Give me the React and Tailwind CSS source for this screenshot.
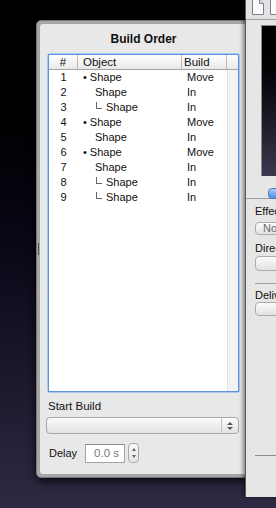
import React from "react";

const rows = [
  { n: 1, level: 0, build: "Move" },
  { n: 2, level: 1, build: "In" },
  { n: 3, level: 2, build: "In" },
  { n: 4, level: 0, build: "Move" },
  { n: 5, level: 1, build: "In" },
  { n: 6, level: 0, build: "Move" },
  { n: 7, level: 1, build: "In" },
  { n: 8, level: 2, build: "In" },
  { n: 9, level: 2, build: "In" },
];

function UpDown({ size = 3, gap = "gap-[2px]" }) {
  return (
    <div className={`flex flex-col items-center ${gap}`}>
      <div className="w-0 h-0 border-l-[3px] border-r-[3px] border-b-[3px] border-l-transparent border-r-transparent border-b-[#5a5a5a]" />
      <div className="w-0 h-0 border-l-[3px] border-r-[3px] border-t-[3px] border-l-transparent border-r-transparent border-t-[#5a5a5a]" />
    </div>
  );
}

function ObjectCell({ level }) {
  if (level === 0) {
    return (
      <div className="w-[104px] pl-[5px] flex items-center">
        <span className="mr-[3px]">•</span>
        <span>Shape</span>
      </div>
    );
  }
  if (level === 1) {
    return <div className="w-[104px] pl-[17px]">Shape</div>;
  }
  return (
    <div className="w-[104px] pl-[18px] flex items-center">
      <span className="inline-block w-[6px] h-[7px] border-l border-b border-[#666] mr-[4px] mb-[4px]" />
      <span>Shape</span>
    </div>
  );
}

function DocIcon() {
  return (
    <svg width="12" height="16" viewBox="0 0 12 16">
      <path d="M0.5 0.5 H7.5 L11.5 4.5 V15.5 H0.5 Z" fill="#fbfbfb" stroke="#7b7f95" />
      <path d="M7.5 0.5 V4.5 H11.5" fill="#e6e6ee" stroke="#7b7f95" />
    </svg>
  );
}

function BuildOrderPanel() {
  return (
    <div className="absolute left-[36px] top-[20px] w-[220px] h-[458px] rounded-[5px] bg-[#a6a6a6] border border-[#767676] p-[3px] shadow-[0_3px_8px_rgba(0,0,0,0.85)]">
      <div className="absolute left-[1px] top-[222px] w-[1px] h-[12px] bg-[#4f4f4f]" />
      <div className="h-full rounded-[3px] bg-[#e8e8e8] pl-[7px] flex flex-col">
        <div className="w-[193px] h-[29px] flex items-center justify-center text-[12px] font-bold text-[#111]">
          Build Order
        </div>

        <div className="w-[193px] h-[340px] rounded-[3px] border border-[#a9c8f0]">
          <div className="h-full border border-[#5f92da] bg-white flex flex-col">
            <div className="h-[15px] flex border-b border-[#a5a5a5] bg-linear-to-b from-white to-[#e9e9e9] text-[11.5px] leading-[14px] text-[#111]">
              <div className="w-[29px] text-center border-r border-[#b9b9b9]">#</div>
              <div className="w-[104px] pl-[5px] border-r border-[#b9b9b9]">Object</div>
              <div className="w-[45px] pl-[2px] border-r border-[#b9b9b9]">Build</div>
              <div className="flex-1" />
            </div>
            <div className="flex-1 flex">
              <div className="w-[178px] flex flex-col text-[11px] text-[#111]">
                {rows.map((r) => (
                  <div key={r.n} className="h-[15px] flex items-center leading-[15px]">
                    <div className="w-[29px] text-center">{r.n}</div>
                    <ObjectCell level={r.level} />
                    <div className="w-[45px] pl-[5px]">{r.build}</div>
                  </div>
                ))}
              </div>
              <div className="flex-1 bg-[#f3f3f3] border-l border-[#e2e2e2]" />
            </div>
          </div>
        </div>

        <div className="mt-[6px] pl-[1px] text-[11.5px] leading-[14px] text-[#111]">Start Build</div>

        <div className="mt-[4px] -ml-[1px] w-[193px] h-[17px] rounded-[4px] border border-[#a7a7a7] bg-linear-to-b from-[#fbfbfb] to-[#e3e3e3] flex justify-end">
          <div className="w-[17px] border-l border-[#c2c2c2] flex items-center justify-center">
            <UpDown />
          </div>
        </div>

        <div className="mt-[9px] h-[20px] flex items-center text-[11px]">
          <div className="w-[38px] pl-[2px] text-[#111]">Delay</div>
          <div className="w-[40px] h-[19px] bg-white border border-[#a3a3a3] border-t-[#8c8c8c] text-right pr-[5px] leading-[17px] text-[#7a7a7a] text-[11.5px]">
            0.0 s
          </div>
          <div className="ml-[3px] w-[11px] h-[20px] rounded-[4px] border border-[#a9a9a9] bg-linear-to-b from-[#fafafa] to-[#e4e4e4] flex items-center justify-center">
            <div className="flex flex-col items-center gap-[4px]">
              <div className="w-0 h-0 border-l-[2px] border-r-[2px] border-b-[3px] border-l-transparent border-r-transparent border-b-[#666]" />
              <div className="w-0 h-0 border-l-[2px] border-r-[2px] border-t-[3px] border-l-transparent border-r-transparent border-t-[#666]" />
            </div>
          </div>
        </div>
      </div>
    </div>
  );
}

function Inspector() {
  return (
    <div className="absolute left-[245px] top-0 w-[40px] h-[497px] bg-[#e6e6e6] border-l border-[#585858] shadow-[-2px_0_4px_rgba(0,0,0,0.45)] flex flex-col text-[11px] text-[#111]">
      <div className="h-[21px] flex items-start gap-[6px] pl-[6px] -mt-[1px] bg-[#e2e2e2] border-b border-[#a0a0a0]">
        <DocIcon />
        <DocIcon />
      </div>
      <div className="mt-[5px] ml-[15px] h-[151px] border-l border-t border-[#8a8a8a] bg-linear-to-b from-[#000] to-[#3c3a50]" />
      <div className="mt-[12px] h-[12px] relative">
        <div className="absolute left-0 right-0 top-[10px] h-px bg-[#9a9a9a]" />
        <div className="absolute left-[22px] top-0 w-[30px] h-[11px] rounded-[4px] border border-[#4a78bf] bg-linear-to-b from-[#a9cdf5] to-[#4d8fe2]" />
      </div>
      <div className="mt-[4px] ml-[9px] h-[14px] leading-[14px] whitespace-nowrap">Effects</div>
      <div className="mt-[4px] ml-[9px] w-[40px] h-[13px] rounded-[4px] border border-[#ababab] bg-linear-to-b from-[#fbfbfb] to-[#e2e2e2] pl-[7px] leading-[11px] text-[#666] whitespace-nowrap">
        None
      </div>
      <div className="mt-[6px] ml-[9px] h-[14px] leading-[14px] whitespace-nowrap">Direction</div>
      <div className="mt-[1px] ml-[9px] w-[40px] h-[15px] rounded-[4px] border border-[#ababab] bg-linear-to-b from-[#fbfbfb] to-[#e2e2e2]" />
      <div className="mt-[12px] ml-[9px] h-px bg-[#a3a3a3]" />
      <div className="mt-[5px] ml-[9px] h-[13px] leading-[13px] whitespace-nowrap">Delivery</div>
      <div className="ml-[9px] w-[40px] h-[14px] rounded-[4px] border border-[#ababab] bg-linear-to-b from-[#fbfbfb] to-[#e2e2e2]" />
      <div className="mt-[139px] ml-[9px] h-px bg-[#8d8d8d]" />
    </div>
  );
}

export default function App() {
  return (
    <div
      className="relative w-[276px] h-[508px] overflow-hidden bg-linear-to-b from-[#000] via-[#0b0918] to-[#2d2a44]"
      style={{ fontFamily: '"Liberation Sans", Arial, sans-serif' }}
    >
      <BuildOrderPanel />
      <Inspector />
    </div>
  );
}
